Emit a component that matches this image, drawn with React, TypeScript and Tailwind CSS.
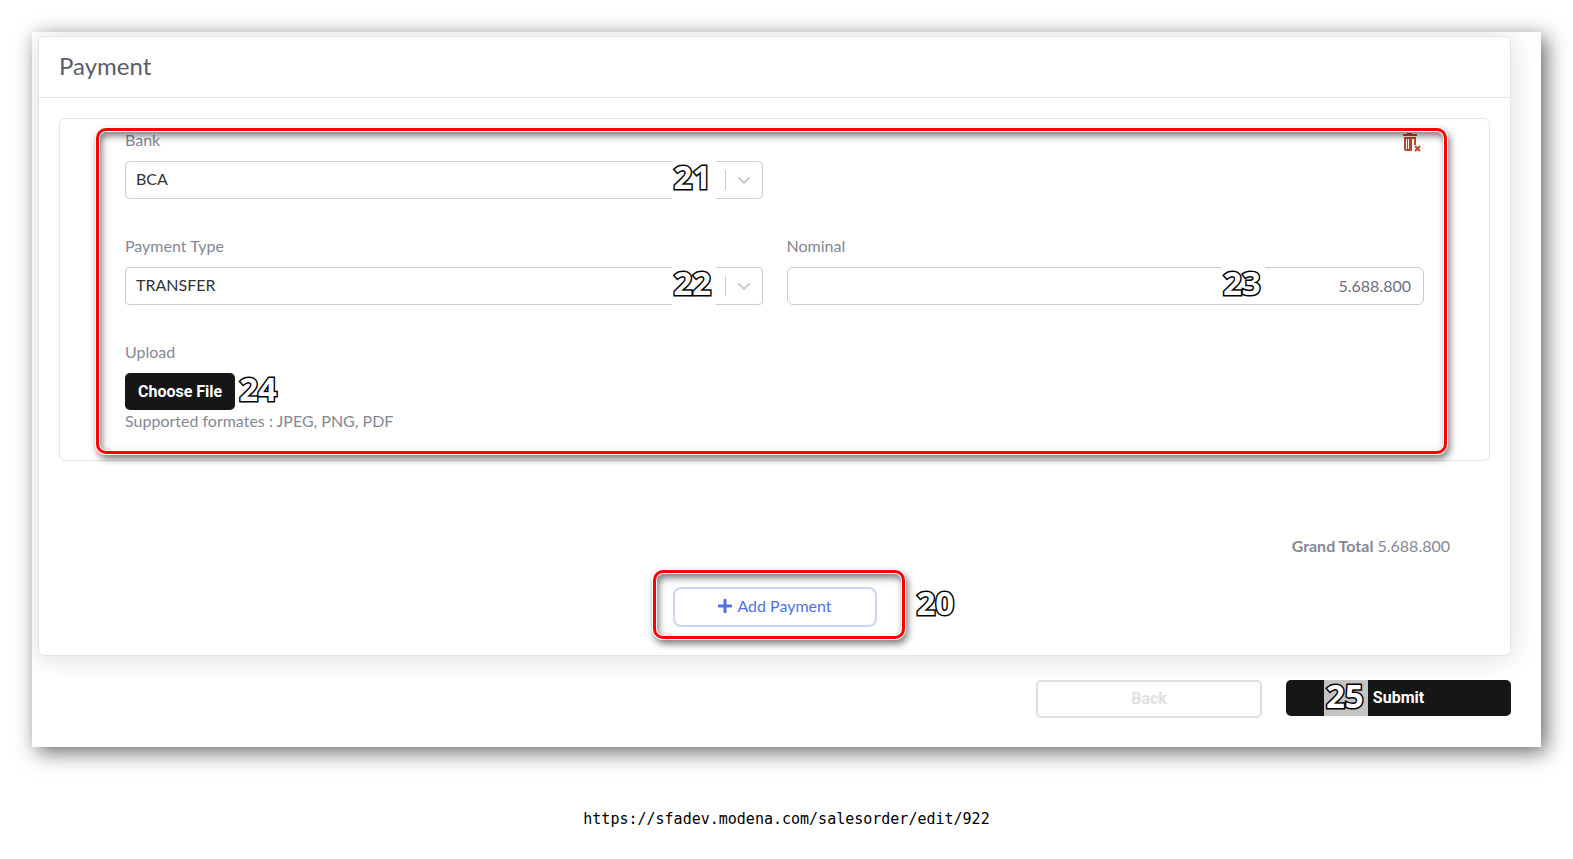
import { useRef, useState } from 'react';
import type { ReactNode } from 'react';
import { FaPlus } from 'react-icons/fa';

const labelClass = 'block mb-[10px] leading-[22px] text-[#858796]';
const selectClass = 'block w-full h-[38px] px-[10px] pb-[2px] appearance-none rounded border border-[#cccccc] bg-white text-[#333333] outline-none';
const frameClass = 'absolute pointer-events-none rounded-[10px] border-3 border-[#ff0000] shadow-[0_0_0_1px_#fff,inset_0_0_0_1px_#fff,2px_4px_7px_1px_rgba(0,0,0,0.5),inset_2px_4px_7px_1px_rgba(0,0,0,0.5)]';
const numberClass = 'absolute pointer-events-none pl-[2px] font-["Open_Sans",sans-serif] text-[33px] leading-8 font-bold text-white [-webkit-text-stroke:3px_#000] [paint-order:stroke_fill]';

const banks = ['BCA', 'BNI', 'MANDIRI'];
const paymentTypes = ['TRANSFER', 'CASH', 'CREDIT CARD'];

function TrashIcon() {
  return (
    <svg width="20" height="20" viewBox="0 0 20 20" fill="none" aria-hidden="true">
      <path d="M5 0h5v1h5v2H1V1h4z" fill="#c0452f" />
      <path d="M2 4h12v8h-2V6h-2v12H4q-2 0-2-2zM4 6v10h1V6zM6 6v10h1V6z" fill="#c0452f" fillRule="evenodd" />
      <path d="M13 13l5 5M18 13l-5 5" stroke="#c0452f" strokeWidth="2" />
    </svg>
  );
}

type SelectFieldProps = {
  id: string;
  label: string;
  options: string[];
  value: string;
  onChange: (value: string) => void;
  children: ReactNode;
};

function SelectField({ id, label, options, value, onChange, children }: SelectFieldProps) {
  return (
    <div>
      <label htmlFor={id} className={labelClass}>{label}</label>
      <div className="relative">
        <select id={id} value={value} onChange={(e) => onChange(e.target.value)} className={selectClass}>
          {options.map((o) => <option key={o}>{o}</option>)}
        </select>
        <div className="absolute inset-y-0 right-px flex items-center pointer-events-none">
          <span className="w-px h-5 bg-[#cccccc]" />
          <svg width="36" height="20" viewBox="0 0 36 20" fill="none" aria-hidden="true">
            <path d="M13 8l5 5 5-5" stroke="#cccccc" strokeWidth="2" strokeLinecap="round" strokeLinejoin="round" />
          </svg>
        </div>
        {children}
      </div>
    </div>
  );
}

export default function App() {
  const [bank, setBank] = useState('BCA');
  const [type, setType] = useState('TRANSFER');
  const [nominal, setNominal] = useState('5.688.800');
  const fileRef = useRef<HTMLInputElement>(null);

  return (
    <div className="p-8 bg-white font-['Lato',sans-serif] text-base">
      <main className="pb-[29px] bg-white shadow-[5px_5px_20px_rgba(0,0,0,0.6)]">
        <div className="overflow-hidden pt-1 pl-[6px] pr-[30px] pb-6">
          <section className="rounded-md border border-[#e3e4f0] bg-white shadow-[0_2px_28px_rgba(0,0,0,0.14)]">
            <h1 className="px-5 pt-[11px] pb-[13px] border-b border-[#e3e4f0] text-2xl leading-9 text-[#5a5c69]">Payment</h1>
            <div className="px-5 pt-5 pb-7">
              <div className="relative rounded-md border border-[#e3e4f0] px-[65px] pt-[10px] pb-[26px]">
                <div className="grid grid-cols-2 gap-x-6 gap-y-9">
                  <SelectField id="bank" label="Bank" options={banks} value={bank} onChange={setBank}>
                    <span className={`${numberClass} inset-y-0 right-[47px] w-11 bg-white`}>21</span>
                  </SelectField>
                  <div className="flex items-start justify-end pt-1 pr-[2px]">
                    <button type="button" aria-label="Remove payment"><TrashIcon /></button>
                  </div>
                  <SelectField id="type" label="Payment Type" options={paymentTypes} value={type} onChange={setType}>
                    <span className={`${numberClass} inset-y-0 right-[47px] w-11 bg-white`}>22</span>
                  </SelectField>
                  <div>
                    <label htmlFor="nominal" className={labelClass}>Nominal</label>
                    <div className="relative">
                      <input id="nominal" type="text" value={nominal} onChange={(e) => setNominal(e.target.value)}
                        className="block w-full h-[38px] px-3 pb-[2px] rounded-md border border-[#c9cbd8] bg-white text-right text-[#6e707e] outline-none" />
                      <span className={`${numberClass} top-0 right-[159px] w-11 bg-white`}>23</span>
                    </div>
                  </div>
                  <div>
                    <label htmlFor="upload" className={labelClass}>Upload</label>
                    <div className="flex">
                      <div className="relative">
                        <button type="button" onClick={() => fileRef.current?.click()}
                          className="block h-[37px] px-[13px] rounded-[5px] bg-[#161616] font-['Roboto',sans-serif] font-bold text-white">Choose File</button>
                        <input id="upload" ref={fileRef} type="file" accept=".jpeg,.png,.pdf" className="hidden" />
                        <span className={`${numberClass} top-0 left-full ml-[2px]`}>24</span>
                      </div>
                    </div>
                    <p className="leading-[22px] pb-[2px] text-[#858796]">Supported formates : JPEG, PNG, PDF</p>
                  </div>
                </div>
                <div className={`${frameClass} left-9 right-[42px] top-[9px] bottom-[6px]`} />
              </div>
              <p className="mt-[73px] pr-10 text-right text-[#858796]"><b>Grand Total</b> 5.688.800</p>
              <div className="mt-[29px] flex justify-center">
                <div className="relative">
                  <button type="button" className="flex items-center justify-center gap-1 w-[204px] h-10 pb-[2px] rounded-lg border-2 border-[#cbd6f7] bg-white text-[#4e73df]">
                    <FaPlus size={16} /> Add Payment
                  </button>
                  <div className={`${frameClass} -left-5 -right-7 -top-[17px] -bottom-3`} />
                  <span className={`${numberClass} top-0 left-full ml-[38px]`}>20</span>
                </div>
              </div>
            </div>
          </section>
        </div>
        <div className="flex justify-end items-start gap-6 pr-[30px]">
          <button type="button" className="w-[226px] h-[38px] rounded-[5px] border-2 border-[#e0e0e0] bg-white font-['Roboto',sans-serif] font-bold text-[#e0e0e0]">Back</button>
          <button type="submit" className="relative w-[225px] h-9 rounded-[5px] bg-[#161616] font-['Roboto',sans-serif] font-bold text-white">
            Submit
            <span className={`${numberClass} inset-y-0 left-[38px] w-11 bg-white/75 text-left`}>25</span>
          </button>
        </div>
      </main>
      <p className="mt-[60px] text-center font-['DejaVu_Sans_Mono',monospace] text-[15px] leading-6 text-black">https://sfadev.modena.com/salesorder/edit/922</p>
    </div>
  );
}
